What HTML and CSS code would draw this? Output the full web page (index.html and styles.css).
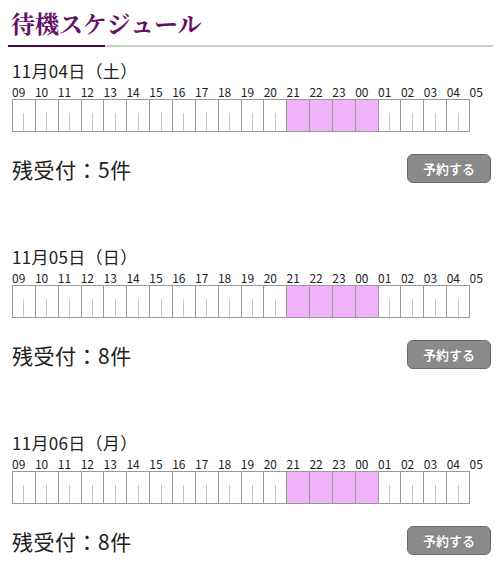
FILE: index.html
```html
<!DOCTYPE html>
<html lang="ja">
<head>
<meta charset="utf-8">
<title>待機スケジュール</title>
<link rel="stylesheet" href="styles.css">
</head>
<body>
<header class="head">
  <h1 class="title">待機スケジュール</h1>
  <div class="rule"><span class="rule-accent"></span><span class="rule-rest"></span></div>
</header>

<section class="day">
  <div class="date">11月04日（土）</div>
  <div class="hours">
    <span>09</span><span>10</span><span>11</span><span>12</span><span>13</span><span>14</span><span>15</span><span>16</span><span>17</span><span>18</span><span>19</span><span>20</span><span>21</span><span>22</span><span>23</span><span>00</span><span>01</span><span>02</span><span>03</span><span>04</span><span>05</span>
  </div>
  <div class="cells">
    <i class="cell"></i><i class="cell"></i><i class="cell"></i><i class="cell"></i><i class="cell"></i><i class="cell"></i><i class="cell"></i><i class="cell"></i><i class="cell"></i><i class="cell"></i><i class="cell"></i><i class="cell"></i><i class="cell on"></i><i class="cell on"></i><i class="cell on"></i><i class="cell on"></i><i class="cell"></i><i class="cell"></i><i class="cell"></i><i class="cell"></i>
  </div>
  <div class="row">
    <span class="rest">残受付：5件</span>
    <button class="btn">予約する</button>
  </div>
</section>

<section class="day">
  <div class="date">11月05日（日）</div>
  <div class="hours">
    <span>09</span><span>10</span><span>11</span><span>12</span><span>13</span><span>14</span><span>15</span><span>16</span><span>17</span><span>18</span><span>19</span><span>20</span><span>21</span><span>22</span><span>23</span><span>00</span><span>01</span><span>02</span><span>03</span><span>04</span><span>05</span>
  </div>
  <div class="cells">
    <i class="cell"></i><i class="cell"></i><i class="cell"></i><i class="cell"></i><i class="cell"></i><i class="cell"></i><i class="cell"></i><i class="cell"></i><i class="cell"></i><i class="cell"></i><i class="cell"></i><i class="cell"></i><i class="cell on"></i><i class="cell on"></i><i class="cell on"></i><i class="cell on"></i><i class="cell"></i><i class="cell"></i><i class="cell"></i><i class="cell"></i>
  </div>
  <div class="row">
    <span class="rest">残受付：8件</span>
    <button class="btn">予約する</button>
  </div>
</section>

<section class="day">
  <div class="date">11月06日（月）</div>
  <div class="hours">
    <span>09</span><span>10</span><span>11</span><span>12</span><span>13</span><span>14</span><span>15</span><span>16</span><span>17</span><span>18</span><span>19</span><span>20</span><span>21</span><span>22</span><span>23</span><span>00</span><span>01</span><span>02</span><span>03</span><span>04</span><span>05</span>
  </div>
  <div class="cells">
    <i class="cell"></i><i class="cell"></i><i class="cell"></i><i class="cell"></i><i class="cell"></i><i class="cell"></i><i class="cell"></i><i class="cell"></i><i class="cell"></i><i class="cell"></i><i class="cell"></i><i class="cell"></i><i class="cell on"></i><i class="cell on"></i><i class="cell on"></i><i class="cell on"></i><i class="cell"></i><i class="cell"></i><i class="cell"></i><i class="cell"></i>
  </div>
  <div class="row">
    <span class="rest">残受付：8件</span>
    <button class="btn">予約する</button>
  </div>
</section>
</body>
</html>
```

FILE: styles.css
```css
html, body {
  margin: 0;
  padding: 0;
  background: #ffffff;
}

body {
  width: 500px;
  color: #222222;
  font-family: "Noto Sans CJK JP", sans-serif;
}

.head {
  padding: 8px 7px 0 8px;
}

.title {
  margin: 0;
  padding-left: 3px;
  font-family: "Noto Serif CJK JP", "Noto Sans CJK JP", serif;
  font-size: 24px;
  line-height: 30px;
  font-weight: bold;
  color: #660f66;
}

.rule {
  display: flex;
  margin-top: 7px;
  height: 2px;
}

.rule-accent {
  width: 97px;
  background: #4a0c4a;
}

.rule-rest {
  flex: 1;
  background: #cccccc;
}

.day {
  padding-left: 12px;
  margin-top: 14px;
  margin-bottom: 64px;
}

.day:last-child {
  margin-bottom: 0;
}

.date {
  font-size: 17px;
  line-height: 20px;
  height: 20px;
  letter-spacing: 0.3px;
  margin-bottom: 3px;
}

.hours {
  display: grid;
  grid-template-columns: repeat(21, 22.88px);
  font-size: 12px;
  line-height: 15px;
  color: #222222;
}

.cells {
  display: grid;
  grid-template-columns: repeat(20, 1fr);
  width: 457px;
  height: 31px;
  border: 1px solid #999999;
  border-right: 0;
}

.cell {
  display: block;
  border-right: 1px solid #999999;
  background: linear-gradient(#c4c4c4, #c4c4c4) no-repeat 50% 100% / 1px 57%;
}

.cell.on {
  background: #f0b2f8;
}

.row {
  display: flex;
  justify-content: space-between;
  align-items: center;
  margin-top: 22px;
  padding-right: 9px;
}

.rest {
  font-size: 21px;
  line-height: 28px;
  letter-spacing: 0.5px;
  color: #222222;
}

.btn {
  width: 84px;
  height: 29px;
  padding: 0;
  border: 1px solid #6a6a6a;
  border-radius: 6px;
  background: #8a8a8a;
  color: #ffffff;
  font-family: "Noto Sans CJK JP", sans-serif;
  font-size: 13px;
  font-weight: bold;
  text-shadow: 0 0 1px rgba(0, 0, 0, 0.4);
}
```
